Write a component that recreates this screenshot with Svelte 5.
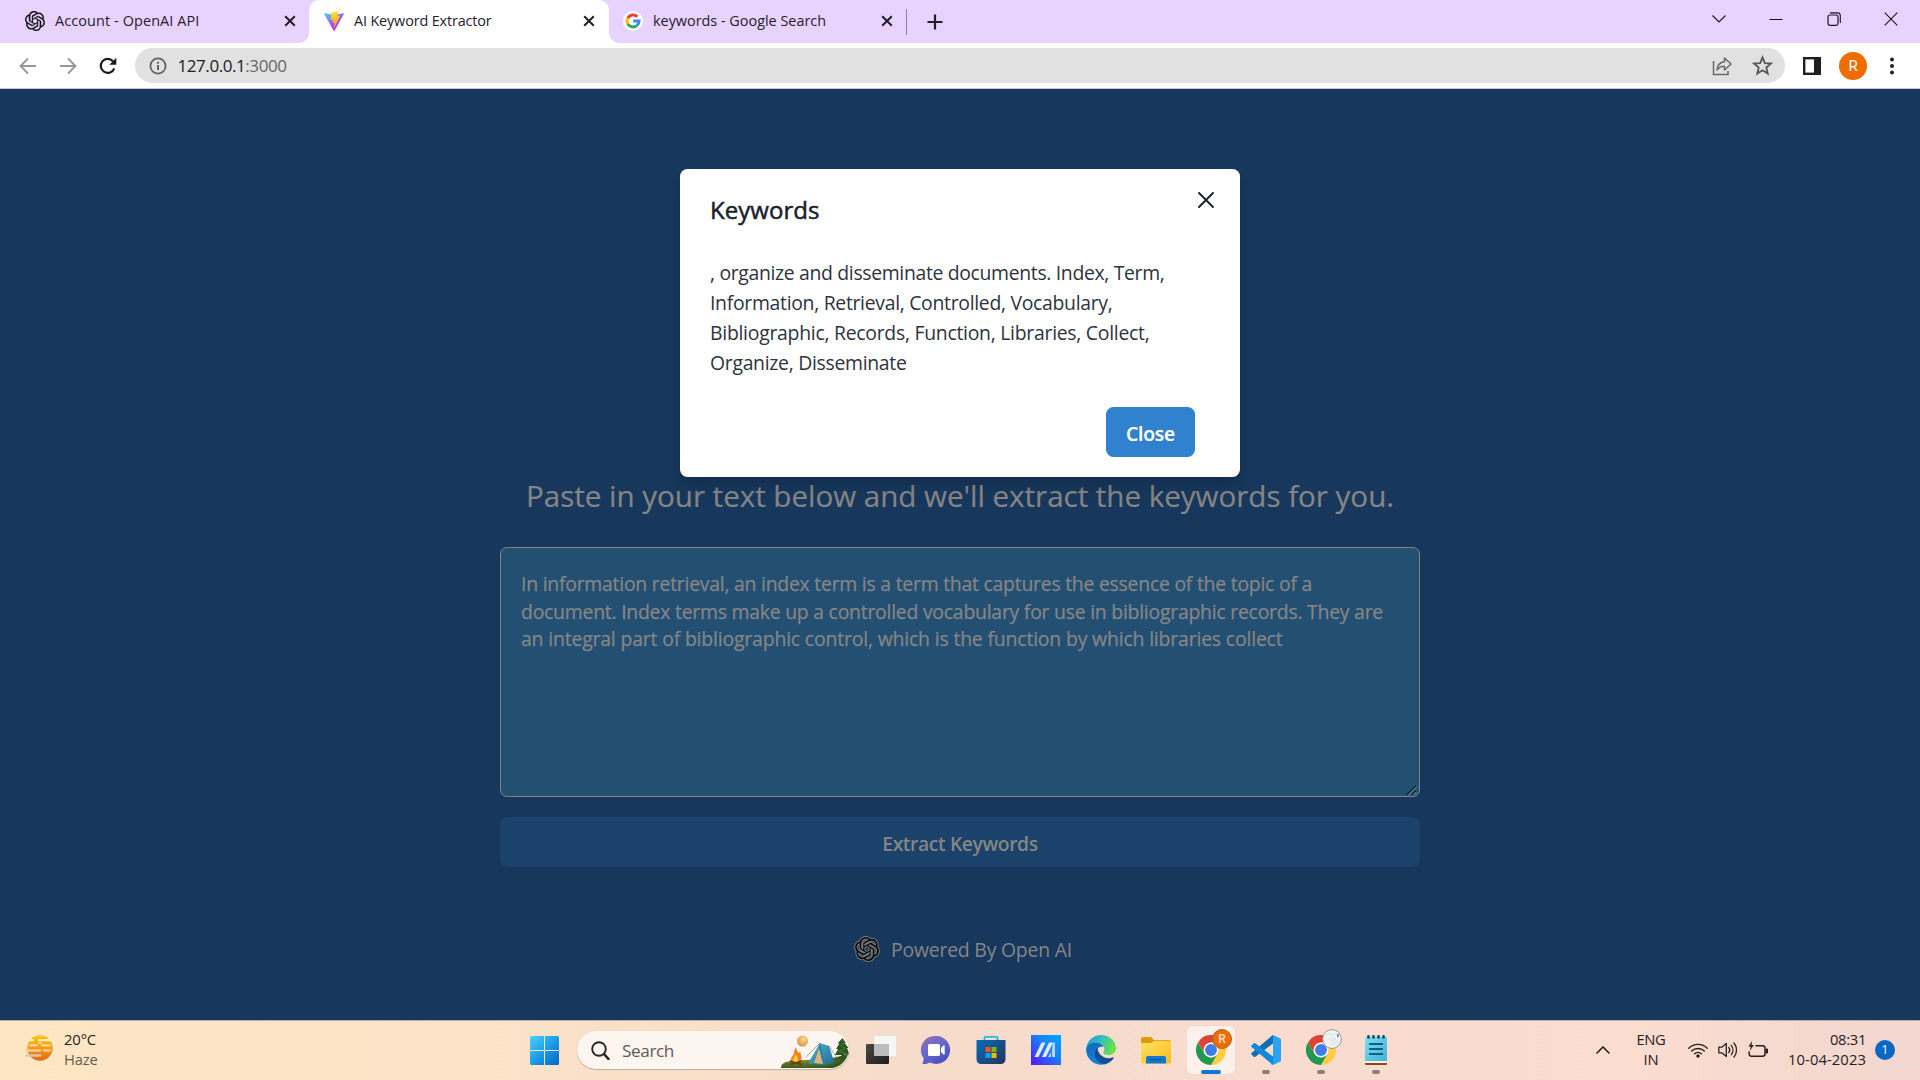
<script>
  // Spreads the letters of a line so that it fills the given width.
  function fit(node, width) {
    const natural = node.getBoundingClientRect().width;
    const count = node.textContent.length;
    node.style.letterSpacing = `${(width - natural) / count}px`;
  }

  const tabs = [
    { icon: 'openai', title: 'Account - OpenAI API', width: 144.5, active: false },
    { icon: 'vite', title: 'AI Keyword Extractor', width: 137.5, active: true },
    { icon: 'google', title: 'keywords - Google Search', width: 173, active: false }
  ];

  const keywordLines = [
    [', organize and disseminate documents. Index, Term,', 454.5],
    ['Information, Retrieval, Controlled, Vocabulary,', 402.5],
    ['Bibliographic, Records, Function, Libraries, Collect,', 439.5],
    ['Organize, Disseminate', 196.5]
  ];

  const sourceLines = [
    ['In information retrieval, an index term is a term that captures the essence of the topic of a', 791],
    ['document. Index terms make up a controlled vocabulary for use in bibliographic records. They are', 862],
    ['an integral part of bibliographic control, which is the function by which libraries collect', 761.5]
  ];

  const apps = [
    { name: 'taskview' },
    { name: 'chat' },
    { name: 'store' },
    { name: 'myasus' },
    { name: 'edge' },
    { name: 'explorer' },
    { name: 'chrome', badge: 'R', state: 'active' },
    { name: 'vscode', state: 'open' },
    { name: 'chrome', badge: 'photo', state: 'open' },
    { name: 'notepad', state: 'open' }
  ];

  const openaiPath =
    'M22.2819 9.8211a5.9847 5.9847 0 0 0-.5157-4.9108 6.0462 6.0462 0 0 0-6.5098-2.9A6.0651 6.0651 0 0 0 4.9807 4.1818a5.9847 5.9847 0 0 0-3.9977 2.9 6.0462 6.0462 0 0 0 .7427 7.0966 5.98 5.98 0 0 0 .511 4.9107 6.051 6.051 0 0 0 6.5146 2.9001A5.9847 5.9847 0 0 0 13.2599 24a6.0557 6.0557 0 0 0 5.7718-4.2058 5.9894 5.9894 0 0 0 3.9977-2.9001 6.0557 6.0557 0 0 0-.7475-7.0729zm-9.022 12.6081a4.4755 4.4755 0 0 1-2.8764-1.0408l.1419-.0804 4.7783-2.7582a.7948.7948 0 0 0 .3927-.6813v-6.7369l2.02 1.1686a.071.071 0 0 1 .038.052v5.5826a4.504 4.504 0 0 1-4.4945 4.4944zm-9.6607-4.1254a4.4708 4.4708 0 0 1-.5346-3.0137l.142.0852 4.783 2.7582a.7712.7712 0 0 0 .7806 0l5.8428-3.3685v2.3324a.0804.0804 0 0 1-.0332.0615L9.74 19.9502a4.4992 4.4992 0 0 1-6.1408-1.6464zM2.3408 7.8956a4.485 4.485 0 0 1 2.3655-1.9728V11.6a.7664.7664 0 0 0 .3879.6765l5.8144 3.3543-2.0201 1.1685a.0757.0757 0 0 1-.071 0l-4.8303-2.7865A4.504 4.504 0 0 1 2.3408 7.872zm16.5963 3.8558L13.1038 8.364 15.1192 7.2a.0757.0757 0 0 1 .071 0l4.8303 2.7913a4.4944 4.4944 0 0 1-.6765 8.1042v-5.6772a.79.79 0 0 0-.407-.667zm2.0107-3.0231l-.142-.0852-4.7735-2.7818a.7759.7759 0 0 0-.7854 0L9.409 9.2297V6.8974a.0662.0662 0 0 1 .0284-.0615l4.8303-2.7866a4.4992 4.4992 0 0 1 6.6802 4.66zM8.3065 12.863l-2.02-1.1638a.0804.0804 0 0 1-.038-.0567V6.0742a4.4992 4.4992 0 0 1 7.3757-3.4537l-.142.0805L8.704 5.459a.7948.7948 0 0 0-.3927.6813zm1.0976-2.3654l2.602-1.4998 2.6069 1.4998v2.9994l-2.5974 1.4997-2.6067-1.4997Z';
</script>

{#snippet favicon(name)}
  {#if name === 'openai'}
    <svg class="fav" viewBox="0 0 24 24"><path d={openaiPath} fill="#111" stroke="#111" stroke-width=".25" /></svg>
  {:else if name === 'vite'}
    <svg class="fav" viewBox="0 0 256 257">
      <defs>
        <linearGradient id="va" x1="0" y1="0.02" x2=".58" y2=".78"><stop stop-color="#41D1FF" /><stop offset="1" stop-color="#BD34FE" /></linearGradient>
        <linearGradient id="vb" x1=".43" y1=".02" x2=".5" y2=".9"><stop stop-color="#FFEA83" /><stop offset=".08" stop-color="#FFDD35" /><stop offset="1" stop-color="#FFA800" /></linearGradient>
      </defs>
      <path fill="url(#va)" d="M255.153 37.938L134.897 252.976c-2.483 4.44-8.862 4.466-11.382.048L.875 37.958c-2.746-4.814 1.371-10.646 6.827-9.67l120.385 21.517a6.537 6.537 0 0 0 2.322-.004l117.867-21.483c5.438-.991 9.574 4.796 6.877 9.62Z" />
      <path fill="url(#vb)" d="M185.432.063L96.44 17.501a3.268 3.268 0 0 0-2.634 3.014l-5.474 92.456a3.268 3.268 0 0 0 3.997 3.378l24.777-5.718c2.318-.535 4.413 1.507 3.936 3.838l-7.361 36.047c-.495 2.426 1.782 4.5 4.151 3.78l15.304-4.649c2.372-.72 4.652 1.36 4.15 3.788l-11.698 56.621c-.732 3.542 3.979 5.473 5.943 2.437l1.313-2.028l72.516-144.72c1.215-2.423-.88-5.186-3.54-4.672l-25.505 4.922c-2.396.462-4.435-1.77-3.759-4.114l16.646-57.705c.677-2.35-1.37-4.583-3.769-4.113Z" />
    </svg>
  {:else}
    <svg class="fav" viewBox="0 0 20 20">
      <circle cx="10" cy="10" r="10" fill="#fff" />
      <g fill="none" stroke-width="3">
        <path d="M14.4 5.8A6 6 0 0 0 4.8 7.2" stroke="#ea4335" />
        <path d="M4.8 7.1a6 6 0 0 0 0 5.8" stroke="#fbbc05" />
        <path d="M4.8 12.9a6 6 0 0 0 9 1.7" stroke="#34a853" />
        <path d="M10.2 10h5.9a6 6 0 0 1-2.3 4.6" stroke="#4285f4" />
      </g>
    </svg>
  {/if}
{/snippet}

{#snippet chrome()}
  <svg class="app-icon" viewBox="0 0 48 48">
    <path d="M24 24 3.2 12A24 24 0 0 1 44.8 12H24Z" fill="#db4437" />
    <path d="M24 24 44.8 12A24 24 0 0 1 24 48L34.4 30Z" fill="#ffcd40" />
    <path d="M24 12h20.8L34.4 30Z" fill="#ffcd40" />
    <path d="M3.2 12 13.6 30 24 12Z" fill="#db4437" />
    <path d="M3.2 12 13.6 30 24 36l10.4-6L24 48A24 24 0 0 1 3.2 12Z" fill="#23994f" />
    <circle cx="24" cy="24" r="12" fill="#fff" />
    <circle cx="24" cy="24" r="9.5" fill="#3f7de8" />
  </svg>
{/snippet}

{#snippet appIcon(name)}
  {#if name === 'taskview'}
    <svg class="app-icon" viewBox="0 0 30 30">
      <defs>
        <linearGradient id="tv" x1="0" y1="0" x2="1" y2="1"><stop stop-color="#4a4a48" /><stop offset="1" stop-color="#1c1c1c" /></linearGradient>
      </defs>
      <rect x="0" y="9" width="23" height="20" rx="1" fill="url(#tv)" />
      <rect x="8" y="1" width="22" height="20" rx="1" fill="#f6f6f6" />
      <path d="M8 9h15v12H9a1 1 0 0 1-1-1z" fill="#bcbcba" />
    </svg>
  {:else if name === 'chat'}
    <svg class="app-icon" viewBox="0 0 30 30">
      <defs>
        <linearGradient id="ct" x1="0" y1="0" x2=".7" y2="1"><stop stop-color="#a068a8" /><stop offset=".45" stop-color="#6a6bd0" /><stop offset="1" stop-color="#4a50bd" /></linearGradient>
      </defs>
      <path d="M15 1a14 14 0 1 1-6 26.6C6 29 3 29.2 1.2 29c1-1.600 1.600-3.600 1.300-6A14 14 0 0 1 15 1Z" fill="url(#ct)" />
      <rect x="7" y="9" width="12" height="12" rx="1.500" fill="#fff" />
      <path d="m20 13 2.500-2.500q1.200-.6 1.200.8v7.400q0 1.400-1.200.8L20 17Z" fill="#fff" />
    </svg>
  {:else if name === 'store'}
    <svg class="app-icon" viewBox="0 0 30 30">
      <defs>
        <linearGradient id="st" x1="0" y1="0" x2="1" y2="1"><stop stop-color="#0a6ab8" /><stop offset="1" stop-color="#23355c" /></linearGradient>
      </defs>
      <path d="M8.500 6V2.800q0-1 1-1h11q1 0 1 1V6" fill="none" stroke="#25b8ec" stroke-width="1.800" />
      <path d="M.5 5h29v19.500a4.500 4.500 0 0 1-4.500 4.500H5a4.500 4.500 0 0 1-4.500-4.500Z" fill="url(#st)" />
      <path d="M9.500 12h5v5h-5z" fill="#f25022" /><path d="M15.500 12h5v5h-5z" fill="#7fba00" />
      <path d="M9.500 18h5v5h-5z" fill="#00a4ef" /><path d="M15.500 18h5v5h-5z" fill="#ffb900" />
    </svg>
  {:else if name === 'myasus'}
    <svg class="app-icon" viewBox="0 0 30 30">
      <defs>
        <linearGradient id="as" x1="0" y1="1" x2="1" y2="0"><stop stop-color="#5a10ff" /><stop offset=".6" stop-color="#1486ff" /><stop offset="1" stop-color="#00a6ff" /></linearGradient>
      </defs>
      <path d="M0 0h30v30H0z" fill="url(#as)" />
      <path d="M3.500 22 10.500 7.500h4L7.500 22zM11 22l7-14.500h4L15 22z" fill="#dfeaff" />
      <path d="M21.500 7.500H24V22h-3v-6.500zM17 22l3-5v5z" fill="#b9d5ff" />
    </svg>
  {:else if name === 'edge'}
    <svg class="app-icon" viewBox="0 0 30 30">
      <defs>
        <linearGradient id="eg" x1="0" y1=".2" x2="1" y2=".5"><stop stop-color="#1f9bdc" /><stop offset=".5" stop-color="#36c2b4" /><stop offset="1" stop-color="#6ae444" /></linearGradient>
        <linearGradient id="eb" x1="0" y1="0" x2=".4" y2="1"><stop stop-color="#1267b4" /><stop offset="1" stop-color="#0f86e0" /></linearGradient>
      </defs>
      <path d="M.3 13C1.300 5.500 7.300 0 15 0c8.600 0 15 6 15 13 0 4.500-3.300 7-7.200 7-3.200 0-5.600-1-5.600-2.200 0-.8 1.200-1.300 1.200-3.300 0-3.500-3.800-6.700-8.900-6.700C5 7.800 1.500 10.200.3 13Z" fill="url(#eg)" />
      <path d="M.1 14.500c.4-4 4.300-6.900 9.200-6.900 3.600 0 6.700 1.600 8.200 4-4.300-.9-7.500 2.400-7.500 6.600 0 6 4.800 11 9.500 10.900A15 15 0 0 1 .1 14.500Z" fill="url(#eb)" />
      <path d="M11.700 12.800c-3.500 2.400-4 7.600-1.500 11.500 2.500 4 6.800 5.500 9.800 4.600 3.400-1 6.300-3.400 7.700-6 .3-.6-.2-.9-.8-.6-7.600 3.200-15.500-2.500-15.200-9.500Z" fill="#114f96" />
    </svg>
  {:else if name === 'explorer'}
    <svg class="app-icon" viewBox="0 0 30 30">
      <defs>
        <linearGradient id="fx" x1="0" y1="0" x2="1" y2="1"><stop stop-color="#ffe06a" /><stop offset="1" stop-color="#f8bd1c" /></linearGradient>
      </defs>
      <path d="M0 3.500Q0 2 1.500 2H10l3 3h15.500Q30 5 30 6.500V10H0z" fill="#dd9c08" />
      <path d="M0 8h10l3.500-2.300H30V27.500q0 1-1 1H1q-1 0-1-1z" fill="url(#fx)" />
      <path d="M5 28.500V23q0-2 2-2h16q2 0 2 2v5.500z" fill="#1477ce" />
      <path d="M8 24.700h13" stroke="#0a4f93" stroke-width="1" />
    </svg>
  {:else if name === 'chrome'}
    {@render chrome()}
  {:else if name === 'vscode'}
    <svg class="app-icon" viewBox="0 0 30 30">
      <path d="M22 0v8.500L4.300 21.700q-.8.600-1.500 0L.5 19.500q-.8-.8 0-1.600Z" fill="#0f6eb5" />
      <path d="M22 30v-8.500L4.300 8.300q-.8-.6-1.500 0L.5 10.500q-.8.800 0 1.600Z" fill="#138ad8" />
      <path d="M22 0 29 3.200q1 .5 1 1.600v20.400q0 1.100-1 1.600L22 30q-1 .2-1.700-.6 1.700.7 1.700-1V1.600q0-1.700-1.700-1Q21 -.2 22 0Z" fill="#2ba3f0" />
    </svg>
  {:else}
    <svg class="app-icon" viewBox="0 0 30 30">
      <defs>
        <linearGradient id="np" x1="0" y1="0" x2="1" y2="1"><stop stop-color="#7be0f2" /><stop offset="1" stop-color="#43b0d3" /></linearGradient>
      </defs>
      <path d="M4 25h22v4q0 1-1 1H5q-1 0-1-1z" fill="#8a4a12" />
      <path d="M4 25.500h22V28H4z" fill="#f4f0ea" />
      <rect x="4" y="2" width="22" height="24" rx="1" fill="url(#np)" />
      <g stroke="#11516b" stroke-width="2.800" stroke-linecap="round"><path d="M7.500 1.400v1M12.500 1.400v1M17.500 1.400v1M22.500 1.400v1" /></g>
      <path d="M8 9h14M8 14h14M8 19h14" stroke="#0c5f83" stroke-width="1.800" />
    </svg>
  {/if}
{/snippet}

<div class="screen">
  <div class="tabstrip">
    {#each tabs as tab}
      <div class="tab" class:active={tab.active}>
        {@render favicon(tab.icon)}
        <div class="tab-title"><span use:fit={tab.width}>{tab.title}</span></div>
        <svg class="tab-close" viewBox="0 0 12 12"><path d="m1.200 1.200 9.600 9.600M10.800 1.200l-9.600 9.600" stroke="#1f1f24" stroke-width="2" /></svg>
      </div>
    {/each}
    <div class="tab-divider"></div>
    <svg class="new-tab" viewBox="0 0 16 16"><path d="M8 .5v15M.5 8h15" stroke="#1f1f24" stroke-width="2.200" /></svg>
    <div class="window-controls">
      <svg viewBox="0 0 14 14"><path d="M.5 3.500 7 10l6.500-6.500" /></svg>
      <svg viewBox="0 0 14 14"><path d="M.5 7.500h13" stroke-width="1" /></svg>
      <svg viewBox="0 0 14 14"><rect x="1" y="3" width="10" height="10.300" rx="1.800" stroke-width="1.200" /><path d="M3 .9h7.500q2.800 0 2.800 2.800v7.300" /></svg>
      <svg viewBox="0 0 14 14"><path d="m.7.7 12.600 12.600M13.300.7.700 13.300" /></svg>
    </div>
  </div>

  <div class="toolbar">
    <svg class="nav" viewBox="0 0 18 18"><path d="M17 9H2M9 1.500 1.500 9 9 16.500" fill="none" stroke="#98989b" stroke-width="1.900" /></svg>
    <svg class="nav" viewBox="0 0 18 18"><path d="M1 9h15M9 1.500 16.500 9 9 16.500" fill="none" stroke="#98989b" stroke-width="1.900" /></svg>
    <svg class="nav reload" viewBox="0 0 18 18"><path d="M15.300 11.300A7 7 0 1 1 14 4.200" fill="none" stroke="#1c1c1f" stroke-width="2.200" /><path d="M17.300.8v7h-7z" fill="#1c1c1f" /></svg>
    <div class="address">
      <svg class="info" viewBox="0 0 18 18"><circle cx="9" cy="9" r="7.600" fill="none" stroke="#5f6063" stroke-width="1.700" /><path d="M9 8v5M9 4.800v1.900" stroke="#5f6063" stroke-width="1.900" /></svg>
      <div class="url"><span use:fit={109}>127.0.0.1<i>:3000</i></span></div>
      <svg class="share" viewBox="0 0 20 20"><path d="M1.500 5v13.500h14.500V15" fill="none" stroke="#6a6a6d" stroke-width="1.500" /><path d="M5 14C5.500 9 8.500 6.200 12.500 5.800V2L19 8l-6.500 6v-3.800C9.500 10.200 7 11.200 5 14Z" fill="none" stroke="#6a6a6d" stroke-width="1.500" stroke-linejoin="round" /></svg>
      <svg class="star" viewBox="0 0 20 20"><path d="m10 2.200 2.200 5.500 5.900.4-4.500 3.800 1.400 5.700-5-3.100-5 3.100 1.400-5.700-4.500-3.800 5.900-.4Z" fill="none" stroke="#56565a" stroke-width="1.700" /></svg>
    </div>
    <svg class="panel" viewBox="0 0 18 18"><rect x="1.200" y="1.200" width="15.600" height="15.600" fill="none" stroke="#1f1f22" stroke-width="2.400" /><path d="M11 1h6v16h-6z" fill="#1f1f22" /></svg>
    <div class="avatar">R</div>
    <svg class="dots" viewBox="0 0 6 18"><g fill="#1f1f22"><circle cx="3" cy="2.500" r="2" /><circle cx="3" cy="9" r="2" /><circle cx="3" cy="15.500" r="2" /></g></svg>
  </div>

  <main>
    <div class="lead"><span use:fit={868}>Paste in your text below and we'll extract the keywords for you.</span></div>
    <div class="source">
      {#each sourceLines as [text, width]}
        <div><span use:fit={width}>{text}</span></div>
      {/each}
      <svg class="grip" viewBox="0 0 12 12"><path d="M1 10.500 10 1.500M6 10.500 10 6.500" stroke="#10212f" stroke-width="1.400" /><path d="M2.500 11 10.500 3M7.500 11l3-3" stroke="#8c979e" stroke-width="1" /></svg>
    </div>
    <div class="extract"><span use:fit={155.5}>Extract Keywords</span></div>
    <div class="powered">
      <svg viewBox="-1 -1 26 26"><path d={openaiPath} fill="#787b7e" stroke="#787b7e" stroke-width="2" /><path d={openaiPath} fill="#050607" /></svg>
      <span use:fit={181}>Powered By Open AI</span>
    </div>

    <div class="overlay">
      <div class="modal">
        <header><span use:fit={109.5}>Keywords</span></header>
        <svg class="modal-close" viewBox="0 0 16 16"><path d="m1 1 14 14M15 1 1 15" stroke="#1a202c" stroke-width="1.900" stroke-linecap="round" /></svg>
        <div class="modal-body">
          {#each keywordLines as [text, width]}
            <div><span use:fit={width}>{text}</span></div>
          {/each}
        </div>
        <footer><div class="close-button"><span use:fit={49}>Close</span></div></footer>
      </div>
    </div>
  </main>

  <div class="taskbar">
    <div class="weather">
      <svg viewBox="0 0 30 26">
        <defs>
          <linearGradient id="sun" x1="0" y1="0" x2="0" y2="1"><stop stop-color="#fdc70c" /><stop offset=".5" stop-color="#f79a14" /><stop offset="1" stop-color="#ea6412" /></linearGradient>
        </defs>
        <circle cx="15" cy="13" r="12.700" fill="url(#sun)" />
        <g stroke-width="2.300" stroke-linecap="round">
          <path d="M14 5.200h15M5 5.200h3" stroke="#fdebcd" />
          <path d="M5 10.300h7M14 8.200h2M17 10.300h8" stroke="#fbdfae" stroke-width="1.800" />
          <path d="M1 15.500h14M19 15.500h6" stroke="#ead0a0" />
          <path d="M1.500 20.500h14" stroke="#dcc7a4" />
        </g>
      </svg>
      <div class="weather-text">
        <div class="temp"><span use:fit={32}>20°C</span></div>
        <div class="haze"><span use:fit={33.5}>Haze</span></div>
      </div>
    </div>

    <svg class="start" viewBox="0 0 29 29">
      <defs>
        <linearGradient id="win" gradientUnits="userSpaceOnUse" x1="0" y1="0" x2="29" y2="29"><stop stop-color="#4fd0fb" /><stop offset=".5" stop-color="#1b9de8" /><stop offset="1" stop-color="#0068c8" /></linearGradient>
      </defs>
      <path d="M1 0h13v14H0V1zM15 0h13l1 1v13H15zM0 15h14v14H1l-1-1zM15 15h14v13l-1 1H15z" fill="url(#win)" />
    </svg>

    <div class="search">
      <svg class="magnifier" viewBox="0 0 19 19"><circle cx="8" cy="8" r="6.800" fill="none" stroke="#262626" stroke-width="1.900" /><path d="m13 13 4.500 5" stroke="#262626" stroke-width="2.600" stroke-linecap="round" /></svg>
      <div class="search-text"><span use:fit={52}>Search</span></div>
      <svg class="camp" viewBox="0 0 68 36">
        <defs>
          <radialGradient id="moon" cx=".6" cy=".35" r=".7"><stop stop-color="#f9df8c" /><stop offset="1" stop-color="#dd8a45" /></radialGradient>
          <radialGradient id="hill" cx=".25" cy=".4" r=".9"><stop stop-color="#b99136" /><stop offset=".3" stop-color="#5c7528" /><stop offset="1" stop-color="#244a14" /></radialGradient>
          <linearGradient id="tent" x1="0" y1="0" x2="1" y2="1"><stop stop-color="#57b9d8" /><stop offset="1" stop-color="#1d6892" /></linearGradient>
        </defs>
        <path d="M0 36C0 31 5 29.500 12 28.500c8-1 15-.5 24-.8 12-.7 21-2.700 31-5.700a19 19 0 0 1-16 14H0Z" fill="url(#hill)" />
        <circle cx="21.500" cy="9" r="5.500" fill="url(#moon)" />
        <path d="m61.500 6 3.500 5h-1.500l4 5H66l2.500 6.500H63V26h-2.500v-3H54l3-6h-2l3.500-5.500h-2Z" fill="#28551f" />
        <path d="m61.500 7 1.500 4-3.500 2.500 5 3-7 3 8 2" fill="none" stroke="#4f7d32" />
        <path d="M27 31.500 39 11l9 3 5.500 17-10.500 2Z" fill="url(#tent)" />
        <path d="m39 11 5 21.500-11-1Z" fill="#2c7ea7" /><path d="m38 16 4 16-9-1Z" fill="#d8b875" />
        <path d="m39 11-14 14M48 14l10 15" stroke="#4a5b5c" stroke-width=".5" />
        <path d="M10 30c-1-5 2-5 3-9 0-3 1.500-4 1.500-6 2 4 2 5 3 6l2-1.500c0 5 3 7-1 10.500Z" fill="#f38319" /><path d="M12 30c0-4 2.500-5 2.500-8 2 3 3 5 2 8Z" fill="#ffd33f" />
        <path d="m9 29 12 3.500M20.500 29 9 32.500" stroke="#713914" stroke-width="1.800" />
      </svg>
    </div>

    <div class="apps">
      {#each apps as app}
        <div class="app {app.state ?? ''}">
          {@render appIcon(app.name)}
          {#if app.badge === 'R'}<b class="badge">R</b>{/if}
          {#if app.badge === 'photo'}
            <svg class="badge photo" viewBox="0 0 20 20"><circle cx="10" cy="10" r="9.500" fill="#f0f0f0" stroke="#8d8987" /><path d="m3 7 5-3 2 3 5-3M5 11l7-2 4 4-7 3M8 13l5-2" stroke="#dde1e5" fill="none" /><path d="M16 5v3" stroke="#5f9ac9" stroke-width="2" /></svg>
          {/if}
        </div>
      {/each}
    </div>

    <div class="tray">
      <svg class="up" viewBox="0 0 14 8"><path d="m1 7 6-6 6 6" fill="none" stroke="#26211f" stroke-width="1.600" stroke-linecap="round" /></svg>
      <div class="lang"><div><span use:fit={29}>ENG</span></div><div><span use:fit={15}>IN</span></div></div>
      <svg class="wifi" viewBox="0 0 20 16"><g fill="none" stroke="#26211f" stroke-width="1.400" stroke-linecap="round"><path d="M.8 6.200a13 13 0 0 1 18.400 0M3.700 9a9 9 0 0 1 12.600 0M6.600 11.800a5 5 0 0 1 6.800 0" /></g><circle cx="10" cy="14" r="1.700" fill="#26211f" /></svg>
      <svg class="sound" viewBox="0 0 20 18"><g fill="none" stroke="#26211f" stroke-width="1.300" stroke-linecap="round" stroke-linejoin="round"><path d="M.8 6.200h3L8.300 2.500v13L3.800 11.800h-3Z" /><path d="M10.800 6.500a4 4 0 0 1 0 5M13.300 4.300a7.500 7.500 0 0 1 0 9.400M16 2a11 11 0 0 1 0 14" /></g></svg>
      <svg class="battery" viewBox="0 0 20 17"><path d="M7.500 4.700h7q2.500 0 2.500 2.500v5.600q0 2.500-2.500 2.500h-11Q1.200 15.300 1.200 13V10.500" fill="none" stroke="#26211f" stroke-width="1.500" /><path d="M18 8h1.500v4H18z" fill="#26211f" stroke="#26211f" /><path d="M4 0 .5 5.500h2.300L1.800 10 5.800 4H3.500Z" fill="#26211f" /></svg>
      <div class="clock"><div><span use:fit={36}>08:31</span></div><div><span use:fit={78}>10-04-2023</span></div></div>
      <div class="count">1</div>
    </div>
  </div>
</div>

<style>
  :global(body) { margin: 0; overflow: hidden; }
  .screen { width: 1920px; height: 1080px; display: flex; flex-direction: column; font-family: 'Open Sans', 'Noto Sans', sans-serif; overflow: hidden; }
  span { white-space: pre; display: inline-block; }
  svg { display: block; flex: none; }

  .tabstrip { height: 43px; background: #e8d3ff; display: flex; align-items: center; padding-left: 9px; box-sizing: border-box; flex: none; }
  .tab { width: 300px; height: 43px; box-sizing: border-box; padding: 0 14px 1px 15px; display: flex; align-items: center; position: relative; }
  .tab:nth-child(1) { padding-left: 16px; padding-right: 13px; }
  .tab:nth-child(3) { padding-left: 14px; width: 297px; padding-right: 13px; }
  .tab.active { background: #fff; border-radius: 10px 10px 0 0; }
  .tab.active::before, .tab.active::after { content: ''; position: absolute; bottom: 0; width: 10px; height: 10px; }
  .tab.active::before { left: -10px; background: radial-gradient(circle at 0 0, transparent 9.5px, #fff 10px); }
  .tab.active::after { right: -10px; background: radial-gradient(circle at 100% 0, transparent 9.5px, #fff 10px); }
  .fav { width: 20px; height: 20px; }
  .tab-title { flex: 1; margin-left: 10px; font-size: 14.4px; line-height: 22px; color: #24202c; }
  .tab-close { width: 12px; height: 12px; }
  .tab-divider { width: 1px; height: 26px; background: #8d8498; }
  .new-tab { width: 16px; height: 16px; margin-left: 20px; }
  .window-controls { margin-left: auto; display: flex; gap: 43.3px; padding: 0 22px 6px 0; }
  .window-controls svg { width: 14px; height: 14px; fill: none; stroke: #17141b; stroke-width: 1.1; }

  .toolbar { height: 46px; box-sizing: border-box; border-bottom: 1px solid #c9c9c4; background: #fff; display: flex; align-items: center; padding: 0 25px 0 19px; flex: none; }
  .nav { width: 18px; height: 18px; margin-right: 22px; }
  .reload { margin: 0 18px 0 0; }
  .address { flex: 1; height: 35px; border-radius: 18px; background: #e1e1e1; display: flex; align-items: center; padding: 0 12px 0 14px; margin-right: 18px; box-sizing: border-box; }
  .info { width: 18px; height: 18px; }
  .url { flex: 1; margin-left: 10.5px; font-size: 17px; line-height: 24px; color: #202124; padding-top: 1px; }
  .url i { font-style: normal; color: #66676a; }
  .share { width: 20px; height: 20px; margin-right: 20px; }
  .star { width: 21px; height: 21px; }
  .panel { width: 18px; height: 18px; margin-right: 18px; }
  .avatar { width: 28px; height: 28px; border-radius: 50%; background: #ef6c00; color: #fff; font: 15px/28px Roboto, sans-serif; text-align: center; margin-right: 22px; }
  .dots { width: 6px; height: 18px; }

  main { flex: 1; position: relative; background: #17375c; color: #858585; display: flex; flex-direction: column; align-items: center; padding-top: 384px; box-sizing: border-box; }
  .lead { font-size: 29.6px; line-height: 45px; margin-bottom: 29px; -webkit-text-stroke: 0.2px #858585; }
  .source { position: relative; width: 920px; height: 250px; box-sizing: border-box; border: 1px solid #7d858a; border-radius: 7px; background: #234f73; padding: 22px 20px; font-size: 19.4px; line-height: 27.5px; -webkit-text-stroke: 0.25px #858585; }
  .grip { position: absolute; right: 1px; bottom: 0; width: 12px; height: 12px; }
  .extract { width: 920px; height: 50px; box-sizing: border-box; padding-top: 1px; margin-top: 20px; border-radius: 7.5px; background: #1b426a; text-align: center; font-size: 19.3px; line-height: 51px; font-weight: 600; }
  .powered { display: flex; align-items: center; margin-top: 68px; font-size: 19.4px; line-height: 30px; width: 217px; gap: 11px; padding-left: 5px; }
  .powered svg { width: 26px; height: 26px; margin-top: -3px; }

  .overlay { position: absolute; inset: 0; display: flex; justify-content: center; align-items: flex-start; padding-top: 80px; }
  .modal { position: relative; width: 560px; height: 308px; border-radius: 7.5px; background: #fff; color: #1a202c; box-shadow: 0 12px 19px -4px rgba(0, 0, 0, 0.13), 0 5px 8px -2px rgba(0, 0, 0, 0.08); display: flex; flex-direction: column; }
  header { padding: 22px 30px 18px; font-size: 24px; line-height: 37.5px; -webkit-text-stroke: 0.5px #1a202c; }
  .modal-close { position: absolute; right: 26.5px; top: 22.5px; width: 16px; height: 16px; }
  .modal-body { padding: 11px 30px 9px; font-size: 19.4px; line-height: 30px; color: #2e333e; }
  footer { padding: 20px 45px 20px 30px; display: flex; justify-content: flex-end; }
  .close-button { width: 89px; height: 50px; box-sizing: border-box; padding-top: 1px; border-radius: 7.5px; background: #3182ce; color: #fff; text-align: center; font-size: 19.3px; line-height: 51px; font-weight: 600; -webkit-text-stroke: 0.2px #fff; }

  .taskbar { height: 60px; box-sizing: border-box; border-top: 1px solid #b9aca5; padding-bottom: 1px; flex: none; display: flex; align-items: center; background: linear-gradient(90deg, #fde6c3 0%, #fae3c7 25%, #f6dccb 48%, #f9dccf 70%, #fbdccf 85%, #f1d7d0 100%); color: #26211f; font-size: 14.8px; line-height: 20px; }
  .weather { width: 505px; padding-left: 25px; display: flex; align-items: center; gap: 9px; }
  .weather svg { width: 30px; height: 26px; margin-top: -4px; }
  .weather-text { padding-bottom: 3px; }
  .haze { color: #665d50; }
  .start { width: 29px; height: 29px; margin-right: 18px; }
  .search { width: 272px; height: 38px; box-sizing: border-box; border-radius: 19px; background: #fdf5ef; box-shadow: 0 1px 1px #c0ada0, 0 0 1px #d9c5b6; display: flex; align-items: center; padding-left: 14px; overflow: hidden; }
  .magnifier { width: 19px; height: 19px; }
  .search-text { flex: 1; margin-left: 12px; font-size: 17.2px; line-height: 24px; color: #5d5a58; padding-top: 2px; }
  .camp { width: 68px; height: 36px; margin-right: 0; }
  .apps { display: flex; gap: 7px; margin-left: 8px; }
  .app { position: relative; width: 48px; height: 48px; display: flex; align-items: center; justify-content: center; border-radius: 5px; }
  .app-icon { width: 30px; height: 30px; }
  .app.active { background: #fcf0ea; box-shadow: 0 0 1px #d8c0b3; }
  .app.active::after, .app.open::after { content: ''; position: absolute; bottom: 0; left: 20px; width: 8px; height: 4px; border-radius: 2px; background: #8c7e78; }
  .app.active::after { left: 14px; width: 20px; background: #0a78d4; }
  .badge { position: absolute; left: 25px; top: 3px; width: 20px; height: 20px; box-sizing: border-box; border: 1px solid #a8652f; border-radius: 50%; background: #ef6c00; color: #ffe4cd; font: 500 12px/18px Roboto, sans-serif; text-align: center; }
  .photo { border: 0; background: none; }
  .tray { margin-left: auto; display: flex; align-items: center; padding-right: 25px; }
  .up { width: 14px; height: 8px; margin-right: 26.500px; }
  .lang { text-align: center; margin-right: 22.500px; width: 29px; padding-bottom: 2px; }
  .wifi { width: 20px; height: 16px; margin-right: 10px; }
  .sound { width: 20px; height: 18px; margin-right: 10px; }
  .battery { width: 20px; height: 17px; margin-right: 20px; margin-top: -2px; }
  .clock { text-align: right; margin-right: 9px; width: 78px; padding-bottom: 3px; }
  .count { width: 20px; height: 20px; border-radius: 50%; background: #0a68c4; color: #fff; font-size: 12px; line-height: 20px; text-align: center; }
</style>
